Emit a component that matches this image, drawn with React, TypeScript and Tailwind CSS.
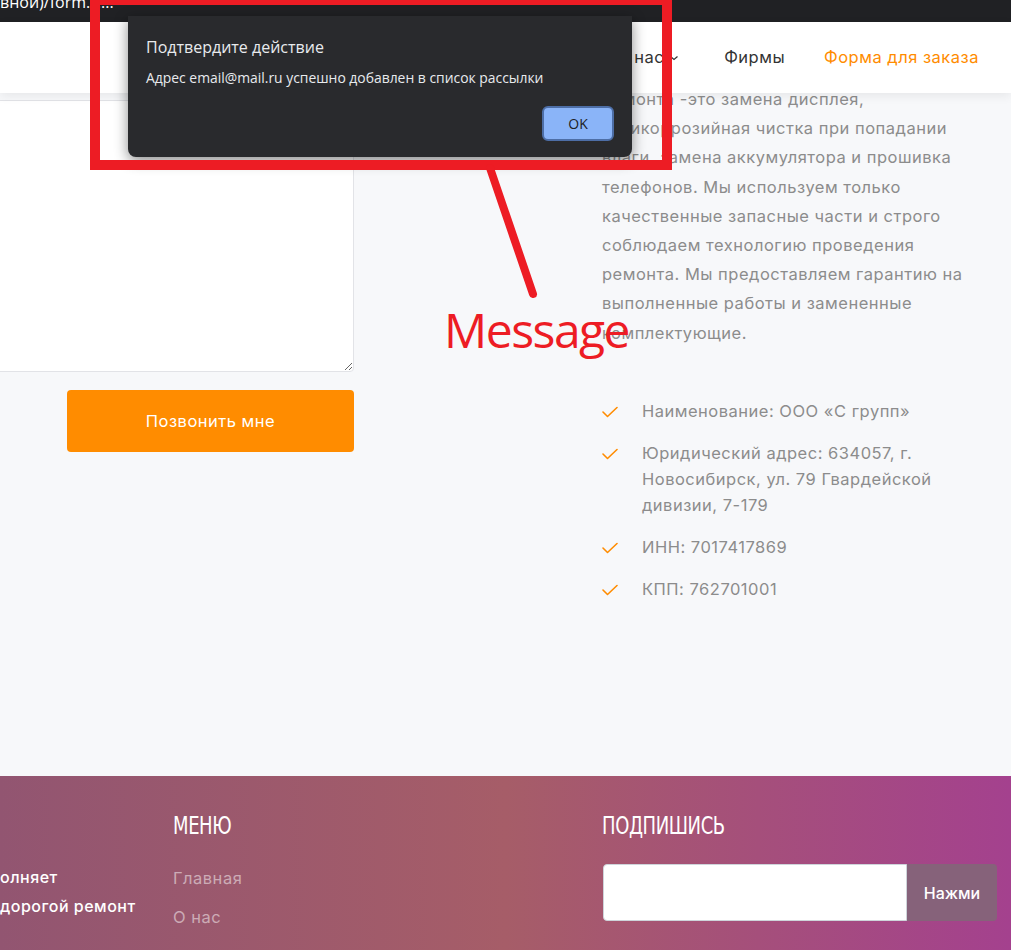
import React from 'react';

const para = [
  'ремонта -это замена дисплея,',
  'антикоррозийная чистка при попадании',
  'влаги, замена аккумулятора и прошивка',
  'телефонов. Мы используем только',
  'качественные запасные части и строго',
  'соблюдаем технологию проведения',
  'ремонта. Мы предоставляем гарантию на',
  'выполненные работы и замененные',
  'комплектующие.',
];

const details = [
  ['Наименование: ООО «С групп»'],
  ['Юридический адрес: 634057, г.', 'Новосибирск, ул. 79 Гвардейской', 'дивизии, 7-179'],
  ['ИНН: 7017417869'],
  ['КПП: 762701001'],
];

function Check() {
  return (
    <svg width="16" height="12" viewBox="0 0 16 12" className="shrink-0 mt-[8px]">
      <polyline points="1,6 5.5,10.5 15,1.5" fill="none" stroke="#ff8c00" strokeWidth="1.6" strokeLinecap="round" strokeLinejoin="round" />
    </svg>
  );
}

export default function App() {
  return (
    <div className="relative w-[1011px] h-[950px] overflow-hidden bg-[#f7f8fa] font-['Inter',sans-serif] text-[16.5px] tracking-[0.5px]">
      {/* browser strip */}
      <div className="h-[22px] bg-[#202124] text-white text-[16px] leading-[16px] tracking-normal overflow-hidden">
        <div className="-mt-[6px] font-['Open_Sans',sans-serif]">вной)/form.r....</div>
      </div>

      {/* header */}
      <header className="relative z-10 h-[71px] bg-white shadow-[0_3px_10px_rgba(0,0,0,0.07)] flex items-center justify-end pr-[32px] text-[#333]">
        <a className="flex items-center">
          О нас
          <svg width="10" height="6" viewBox="0 0 10 6" className="ml-[5px]">
            <polyline points="1.5,1.5 5,4.5 8.5,1.5" fill="none" stroke="#333" strokeWidth="1.2" />
          </svg>
        </a>
        <a className="ml-[45px]">Фирмы</a>
        <a className="ml-[39px] text-[#ff8c00]">Форма для заказа</a>
      </header>

      {/* content */}
      <main className="flex h-[683px]">
        <div className="w-[354px] shrink-0 pt-[7px] flex flex-col items-end">
          <textarea className="block w-[380px] h-[272px] bg-white border border-[#e2e3e7] rounded-[4px] outline-none" />
          <button className="mt-[18px] w-[287px] h-[62px] bg-[#ff8c00] rounded-[4px] text-white">
            Позвонить мне
          </button>
        </div>

        <div className="ml-[248px] -mt-[8px] text-[#8c8c8c]">
          <p className="leading-[29.2px]">
            {para.map((l, i) => (
              <span key={i} className="block">{l}</span>
            ))}
          </p>
          <ul className="mt-[50px] flex flex-col gap-[16px]">
            {details.map((item, i) => (
              <li key={i} className="flex gap-[24px] leading-[26px]">
                <Check />
                <div>
                  {item.map((l, j) => (
                    <span key={j} className="block">{l}</span>
                  ))}
                </div>
              </li>
            ))}
          </ul>
        </div>
      </main>

      {/* footer */}
      <footer className="h-[174px] bg-[linear-gradient(90deg,#925571_0%,#a65d68_50%,#a4418e_100%)] flex pt-[37px]">
        <div className="w-[173px] shrink-0 overflow-hidden">
          <div className="mt-[50px] text-white font-medium text-[16px] leading-[29px]">
            <div className="flex -ml-[160px]">
              <span className="w-[160px] shrink-0 text-right whitespace-nowrap">Компания вып</span>
              <span>олняет</span>
            </div>
            <div className="flex -ml-[160px]">
              <span className="w-[160px] shrink-0 text-right whitespace-nowrap">быстрый и не</span>
              <span>дорогой ремонт</span>
            </div>
          </div>
        </div>

        <div className="w-[429px] shrink-0">
          <h3 className="flex h-[26px] items-center">
            <span className="font-['DejaVu_Sans_Condensed','DejaVu_Sans',sans-serif] text-white text-[25px] leading-[26px] tracking-[-0.5px] origin-left scale-x-[0.8]">МЕНЮ</span>
          </h3>
          <ul className="mt-[27px] leading-[24px] text-white/50 flex flex-col gap-[15px]">
            <li>Главная</li>
            <li>О нас</li>
          </ul>
        </div>

        <div>
          <h3 className="flex h-[26px] items-center">
            <span className="font-['DejaVu_Sans_Condensed','DejaVu_Sans',sans-serif] text-white text-[25px] leading-[26px] tracking-[-0.5px] origin-left scale-x-[0.8] whitespace-nowrap">ПОДПИШИСЬ</span>
          </h3>
          <div className="mt-[25px] flex h-[57px] ml-[1px]">
            <input className="w-[304px] h-full bg-white rounded-l-[4px] border border-[#ced4da] outline-none" />
            <button className="w-[90px] h-full bg-[#86627a] rounded-r-[4px] text-white text-[16px] tracking-normal font-medium">
              Нажми
            </button>
          </div>
        </div>
      </footer>

      {/* alert dialog */}
      <div className="absolute z-20 left-[128px] top-[16px] w-[504px] h-[141px] bg-[#292a2d] rounded-b-[8px] shadow-[0_4px_14px_rgba(0,0,0,0.45)] px-[18px] font-['Open_Sans',sans-serif] tracking-normal">
        <div className="pt-[21px] text-[16px] leading-[20px] text-[#e8eaed]">Подтвердите действие</div>
        <div className="mt-[12px] text-[13.9px] leading-[18px] text-[#e8eaed]">
          Адрес email@mail.ru успешно добавлен в список рассылки
        </div>
        <div className="mt-[19px] flex justify-end">
          <button className="w-[72px] h-[35px] rounded-[6px] bg-[#8ab4f8] border-2 border-[#4d6ea6] text-[#202124] text-[14px]">
            OK
          </button>
        </div>
      </div>

      {/* annotation */}
      <svg className="absolute inset-0 z-30 pointer-events-none" width="1011" height="950">
        <rect x="95" y="0" width="572" height="165" fill="none" stroke="#ed1c24" strokeWidth="10" />
        <line x1="490" y1="168" x2="533" y2="294" stroke="#ed1c24" strokeWidth="8" strokeLinecap="round" />
      </svg>
      <div className="absolute z-30 left-[444px] top-[300px] text-[48px] leading-[60px] tracking-[-1.5px] text-[#ed1c24] font-['Open_Sans',sans-serif]">
        Message
      </div>
    </div>
  );
}
